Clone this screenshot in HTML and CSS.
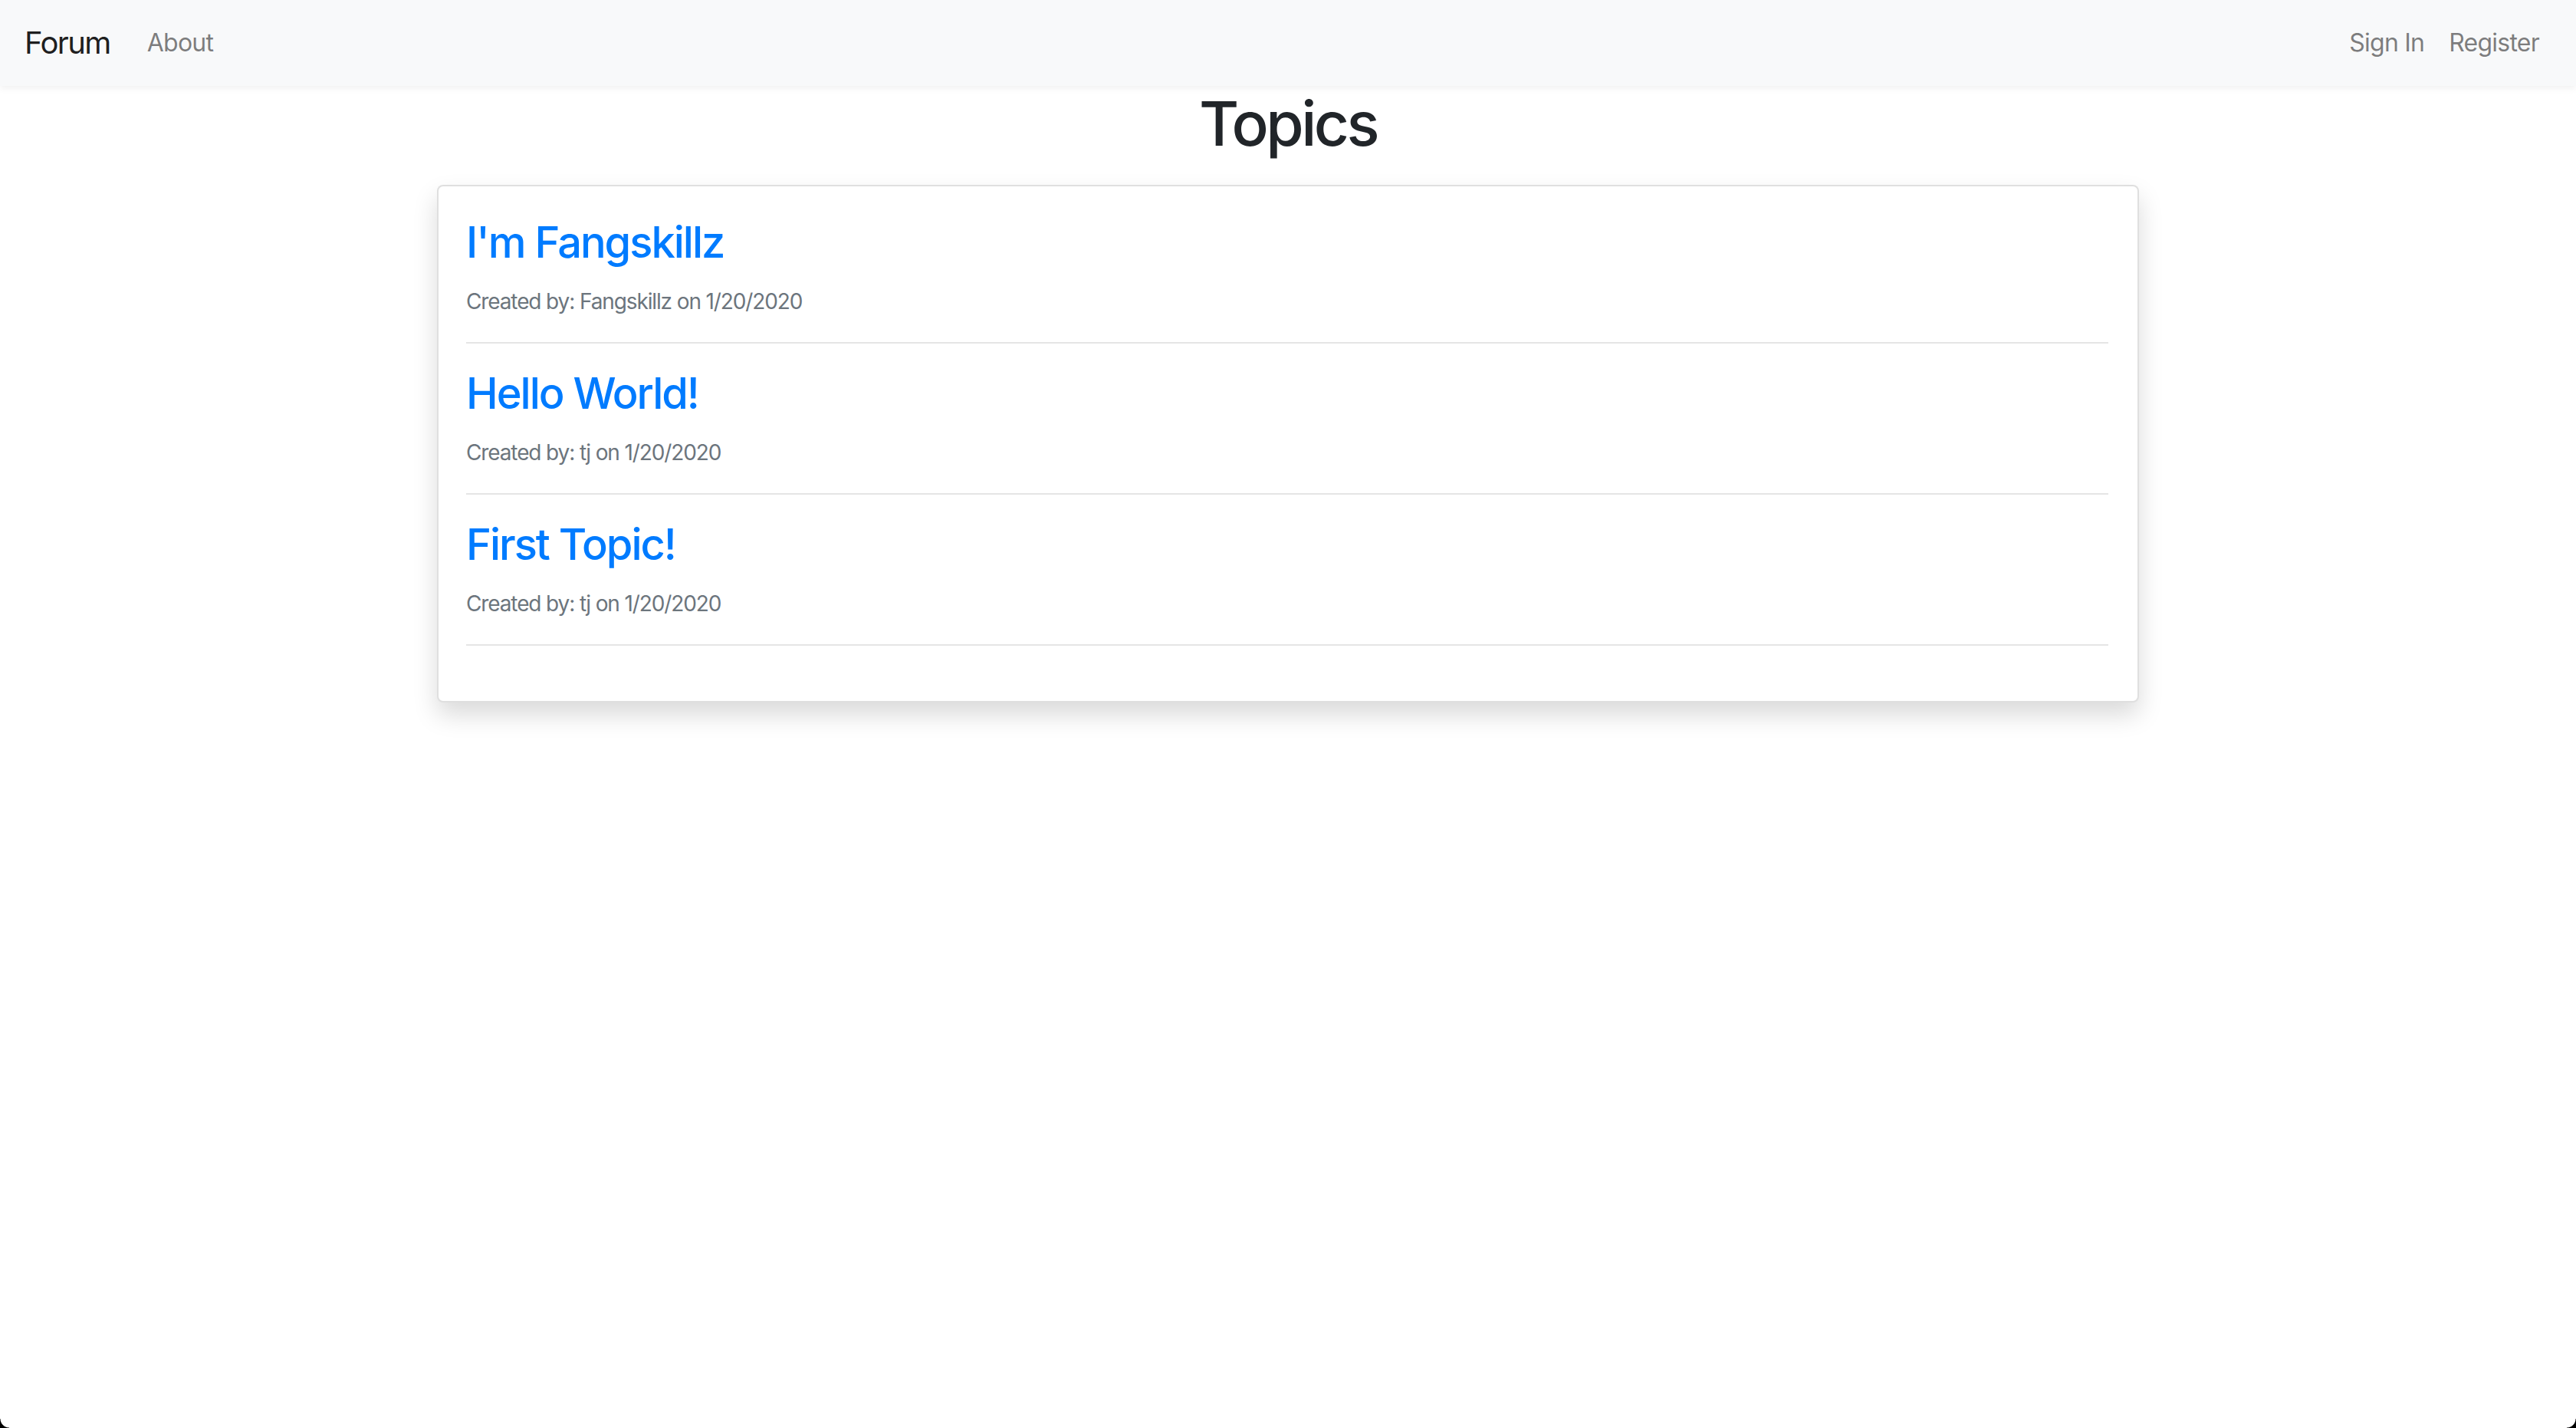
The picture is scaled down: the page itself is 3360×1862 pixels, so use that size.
FILE: index.html
```html
<!DOCTYPE html>
<html lang="en">
<head>
<meta charset="utf-8">
<title>Forum</title>
<link rel="stylesheet" href="styles.css">
</head>
<body>
<nav class="navbar">
  <div class="nav-left">
    <a class="brand" href="#">Forum</a>
    <a class="nav-link" href="#">About</a>
  </div>
  <div class="nav-right">
    <a class="nav-link" href="#">Sign In</a>
    <a class="nav-link" href="#">Register</a>
  </div>
</nav>
<main class="container">
  <h1 class="page-title">Topics</h1>
  <section class="card">
    <article class="topic">
      <h3 class="topic-title"><a href="#">I'm Fangskillz</a></h3>
      <p class="topic-meta">Created by: Fangskillz on 1/20/2020</p>
      <hr class="divider">
    </article>
    <article class="topic">
      <h3 class="topic-title"><a href="#">Hello World!</a></h3>
      <p class="topic-meta">Created by: tj on 1/20/2020</p>
      <hr class="divider">
    </article>
    <article class="topic">
      <h3 class="topic-title"><a href="#">First Topic!</a></h3>
      <p class="topic-meta">Created by: tj on 1/20/2020</p>
      <hr class="divider">
    </article>
  </section>
</main>
<div class="corner corner-left"></div>
<div class="corner corner-right"></div>
</body>
</html>
```
FILE: styles.css
```css
* { box-sizing: border-box; }
html, body { height: 100%; }
body {
  margin: 0;
  font-family: Inter, "Noto Sans", "Liberation Sans", sans-serif;
  color: #212529;
  background: #fff;
  position: relative;
  overflow: hidden;
}
a { text-decoration: none; }

.navbar {
  display: flex;
  justify-content: space-between;
  align-items: center;
  height: 112px;
  padding: 16px 32px;
  background: #f8f9fa;
  box-shadow: 0 4px 8px rgba(0,0,0,0.05);
  position: relative;
  z-index: 1;
}
.nav-left, .nav-right { display: flex; align-items: center; }
.brand {
  font-size: 40px;
  line-height: 60px;
  padding: 10px 0;
  margin-right: 32px;
  letter-spacing: -0.04em;
  color: rgba(0,0,0,0.9);
}
.nav-link {
  font-size: 32px;
  line-height: 48px;
  padding: 16px 16px;
  letter-spacing: -0.024em;
  color: rgba(0,0,0,0.5);
}

.container {
  width: 2220px;
  margin: 0 auto;
}
.page-title {
  margin: 1px 0 0;
  font-size: 80px;
  line-height: 96px;
  font-weight: 500;
  letter-spacing: -0.044em;
  text-align: center;
  color: #212529;
}
.card {
  margin-top: 32px;
  border: 2px solid rgba(0,0,0,0.125);
  border-radius: 8px;
  background: #fff;
  box-shadow: 0 16px 32px rgba(0,0,0,0.15);
  padding: 40px 38px 40px 36px;
}
.topic-title {
  margin: 0 0 22px;
  font-size: 56px;
  line-height: 67px;
  font-weight: 500;
  letter-spacing: -0.036em;
}
.topic-title a { color: #007bff; }
.topic-meta {
  margin: 0 0 32px;
  font-size: 28px;
  line-height: 42px;
  letter-spacing: -0.04em;
  color: #6c757d;
}
.divider {
  margin: 32px 0;
  border: 0;
  border-top: 2px solid rgba(0,0,0,0.1);
  height: 0;
}

.corner {
  position: absolute;
  bottom: 0;
  width: 12px;
  height: 12px;
}
.corner-left {
  left: 0;
  background: radial-gradient(circle at 100% 0, transparent 11px, #000 12px);
}
.corner-right {
  right: 0;
  background: radial-gradient(circle at 0 0, transparent 11px, #000 12px);
}
```
